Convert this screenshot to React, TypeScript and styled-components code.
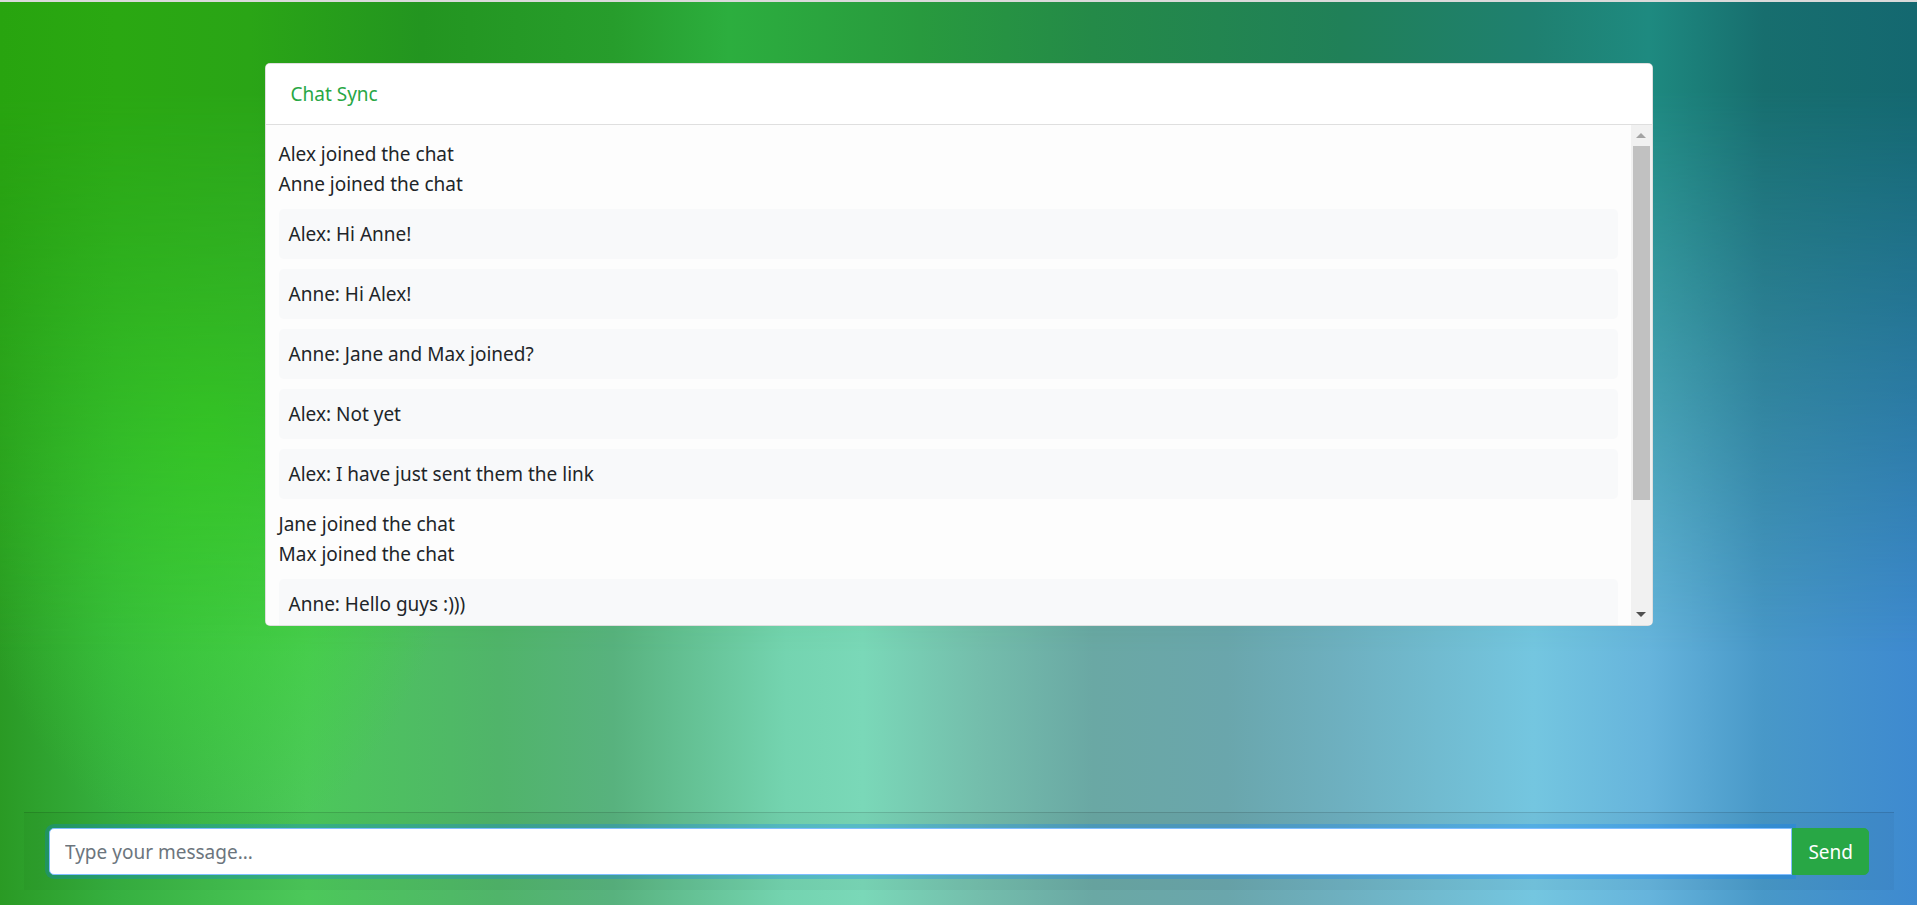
import React from "react"
import styled, { createGlobalStyle } from "styled-components"

type Entry = { kind: "system" | "message"; text: string }

const entries: Entry[] = [
  { kind: "system", text: "Alex joined the chat" },
  { kind: "system", text: "Anne joined the chat" },
  { kind: "message", text: "Alex: Hi Anne!" },
  { kind: "message", text: "Anne: Hi Alex!" },
  { kind: "message", text: "Anne: Jane and Max joined?" },
  { kind: "message", text: "Alex: Not yet" },
  { kind: "message", text: "Alex: I have just sent them the link" },
  { kind: "system", text: "Jane joined the chat" },
  { kind: "system", text: "Max joined the chat" },
  { kind: "message", text: "Anne: Hello guys :)))" },
]

const GlobalStyle = createGlobalStyle`
  *, *::before, *::after {
    box-sizing: border-box;
  }
  html, body {
    margin: 0;
    padding: 0;
  }
  body {
    font-family: "Noto Sans", "Open Sans", sans-serif;
    font-size: 19px;
    line-height: 30px;
    color: #212529;
  }
`

export default function App() {
  return (
    <>
      <GlobalStyle />
      <S.Page>
        <S.Container>
          <S.Card>
            <S.Header>Chat Sync</S.Header>
            <S.Body>
              <S.Messages>
                {entries.map((entry, index) =>
                  entry.kind === "system" ? (
                    <S.SystemLine key={index}>{entry.text}</S.SystemLine>
                  ) : (
                    <S.Bubble key={index}>{entry.text}</S.Bubble>
                  )
                )}
              </S.Messages>
              <S.ScrollTrack>
                <S.ScrollButton>
                  <S.Arrow $dir="up" />
                </S.ScrollButton>
                <S.Thumb />
                <S.TrackRest />
                <S.ScrollButton>
                  <S.Arrow $dir="down" />
                </S.ScrollButton>
              </S.ScrollTrack>
            </S.Body>
          </S.Card>
        </S.Container>

        <S.Footer>
          <S.Input placeholder="Type your message..." autoFocus />
          <S.SendButton>Send</S.SendButton>
        </S.Footer>
      </S.Page>
    </>
  )
}

const S = {
  Page: styled.div`
    position: relative;
    min-height: 100vh;
    display: flex;
    flex-direction: column;
    border-top: 2px solid #dadada;
    overflow: hidden;
    background:
      radial-gradient(ellipse 260px 430px at 210px 420px, rgba(58, 216, 46, 0.9), rgba(58, 216, 46, 0) 100%),
      linear-gradient(
        to right,
        #2a9a24 0%,
        #36b040 6%,
        #4cc85a 16%,
        #50b46a 26%,
        #58b27e 32%,
        #74d4b0 41%,
        #7ad8b8 45%,
        #74beac 51%,
        #6aa8a4 57%,
        #6aa6ac 64%,
        #6eb0c0 70%,
        #74c6e0 80%,
        #66b4dc 86%,
        #4898c8 92%,
        #3e8ad0 100%
      );

    &::before {
      content: "";
      position: absolute;
      inset: 0;
      pointer-events: none;
      background: linear-gradient(
        to right,
        #28a40f 0%,
        #2aa812 6%,
        #2aa516 13%,
        #239520 22%,
        #279d2c 32%,
        #2cae3e 38%,
        #289a3e 48%,
        #248a48 57%,
        #208058 70%,
        #1f8070 80%,
        #1e8a80 86%,
        #176e6e 92%,
        #146870 100%
      );
      -webkit-mask-image: linear-gradient(to bottom, #000 0%, #000 10%, transparent 72%);
      mask-image: linear-gradient(to bottom, #000 0%, #000 10%, transparent 72%);
    }
  `,
  Container: styled.div`
    position: relative;
    width: 1388px;
    margin: 61px auto 0;
  `,
  Card: styled.div`
    background: #fff;
    border: 1px solid rgba(0, 0, 0, 0.125);
    border-radius: 5px;
    overflow: hidden;
  `,
  Header: styled.div`
    padding: 15px 25px;
    color: #28a745;
    background: #fff;
    border-bottom: 1px solid rgba(0, 0, 0, 0.125);
  `,
  Body: styled.div`
    display: flex;
    height: 500px;
    background: #fdfdfd;
  `,
  Messages: styled.div`
    flex: 1;
    min-width: 0;
    overflow: hidden;
    padding: 14px 13px;
  `,
  ScrollTrack: styled.div`
    display: flex;
    flex-direction: column;
    width: 21px;
    background: #f1f1f1;
  `,
  ScrollButton: styled.div`
    display: flex;
    align-items: center;
    justify-content: center;
    height: 21px;
  `,
  Arrow: styled.div<{ $dir: "up" | "down" }>`
    width: 0;
    height: 0;
    border-left: 5px solid transparent;
    border-right: 5px solid transparent;
    ${(p) =>
      p.$dir === "up"
        ? "border-bottom: 5px solid #a3a3a3;"
        : "border-top: 5px solid #505050;"}
  `,
  Thumb: styled.div`
    height: 354px;
    margin: 0 2px;
    background: #c1c1c1;
  `,
  TrackRest: styled.div`
    flex: 1;
  `,
  SystemLine: styled.div`
    line-height: 30px;
  `,
  Bubble: styled.div`
    margin: 10px 0;
    padding: 10px;
    background: #f8f9fa;
    border-radius: 5px;
  `,
  Footer: styled.div`
    position: relative;
    display: flex;
    margin: auto 23px 15px 24px;
    padding: 15px 25px;
    background: rgba(0, 0, 0, 0.03);
    border-top: 1px solid rgba(0, 0, 0, 0.125);
  `,
  Input: styled.input`
    flex: 1;
    height: 47px;
    padding: 7px 15px;
    font-family: inherit;
    font-size: 19px;
    color: #495057;
    background: #fff;
    border: 1px solid #80bdff;
    border-radius: 5px 0 0 5px;
    outline: none;
    box-shadow: 0 0 0 4px rgba(0, 123, 255, 0.25);

    &::placeholder {
      color: #6c757d;
    }
  `,
  SendButton: styled.button`
    height: 47px;
    padding: 7px 15px;
    font-family: inherit;
    font-size: 19px;
    line-height: 30px;
    color: #fff;
    background: #28a745;
    border: 1px solid #28a745;
    border-radius: 0 5px 5px 0;
    cursor: pointer;
  `,
}
